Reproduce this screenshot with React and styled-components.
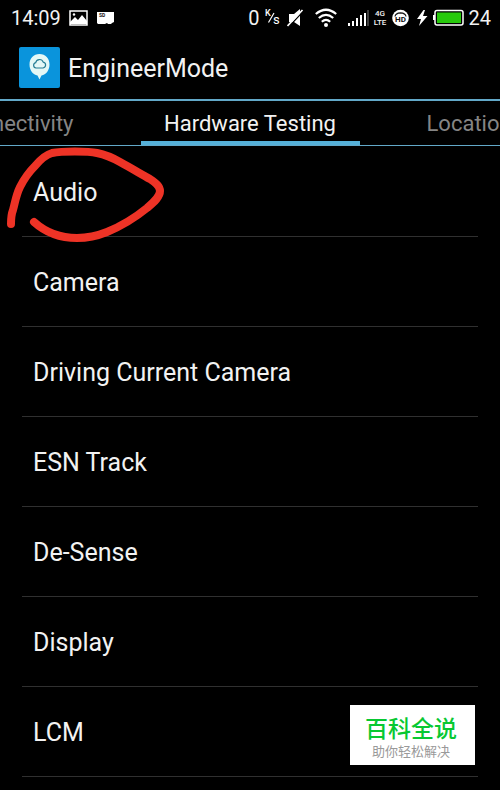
import { useState } from "react";
import styled, { createGlobalStyle } from "styled-components";

const tests = [
  "Audio",
  "Camera",
  "Driving Current Camera",
  "ESN Track",
  "De-Sense",
  "Display",
  "LCM",
];

function StatusBar() {
  return (
    <Status>
      <StatusGroup $gap={8}>
        <StatusText>14:09</StatusText>
        <svg width="19" height="16" viewBox="0 0 19 16">
          <rect x="1" y="1" width="17" height="14" fill="none" stroke="#fff" strokeWidth="1.5" />
          <path d="M1 14V12L6 7l3 3 4-5 5 6v3z" fill="#fff" />
          <circle cx="5" cy="4.5" r="1.2" fill="#fff" />
        </svg>
        <svg width="18" height="16" viewBox="0 0 18 16">
          <path d="M1 2h17v10l-2 1-1 1h-3l-1-1-2 1H2l-1-1z" fill="#fff" />
          <text x="3" y="7" fontSize="5" fontWeight="700" fill="#111">SD</text>
        </svg>
      </StatusGroup>
      <StatusGroup $gap={5}>
        <StatusText>0</StatusText>
        <svg width="17" height="20" viewBox="0 0 17 20">
          <text x="0" y="8" fontSize="9" fontWeight="500" fill="#fff">K</text>
          <path d="M3.5 14.5L9 5" stroke="#fff" strokeWidth="1.2" />
          <text x="8" y="16" fontSize="13" fill="#fff">s</text>
        </svg>
        <svg width="23" height="18" viewBox="0 0 23 18">
          <path d="M2 5h5l6-5v17l-6-4H2z" fill="#fff" />
          <path d="M2 17.500L17 1.500" stroke="#000" strokeWidth="1.200" />
          <path d="M0.500 17L15.500 1" stroke="#fff" strokeWidth="1.700" />
        </svg>
        <svg width="27" height="20" viewBox="0 0 27 20">
          <g fill="none" stroke="#fff" strokeWidth="2.200">
            <path d="M0.800 6Q11-2.500 21.200 6" />
            <path d="M3.800 10Q11 3.700 18.200 10" />
            <path d="M6.800 13.800Q11 10 15.200 13.800" />
          </g>
          <circle cx="11" cy="17" r="2" fill="#fff" />
        </svg>
        <svg width="22" height="18" viewBox="0 0 22 18">
          <path d="M1 14h2v3H1zM5 12h2v5H5zM9 9h2v8H9zM13 6h2v11h-2zM17 4h2v13h-2z" fill="#fff" />
          <path d="M20 1h2v16h-2z" fill="#3c3c3c" />
        </svg>
        <Network>
          <span>4G</span>
          <span>LTE</span>
        </Network>
        <svg width="20" height="18" viewBox="0 0 20 18">
          <circle cx="8.500" cy="9" r="8.300" fill="#fff" />
          <path d="M3 7.500Q3.500 4 8.500 3.800Q13.500 4 14 7.500" fill="none" stroke="#111" strokeWidth="1.200" />
          <text x="8.500" y="13" fontSize="8" fontWeight="700" textAnchor="middle" fill="#111">HD</text>
        </svg>
        <svg width="11" height="18" viewBox="0 0 11 18">
          <path d="M6.500 1L0 10h4L2 17l8.500-10H6L8 1z" fill="#fff" />
        </svg>
        <svg width="31" height="18" viewBox="0 0 31 18">
          <rect x="2" y="1.500" width="28" height="14.500" rx="2" fill="none" stroke="#fff" strokeWidth="1.500" />
          <path d="M0 6h2v5H0z" fill="#fff" />
          <rect x="4" y="3.500" width="24" height="10.500" fill="#27c90c" />
        </svg>
        <StatusText>24</StatusText>
      </StatusGroup>
    </Status>
  );
}

function AppIcon() {
  return (
    <svg width="41" height="41" viewBox="0 0 41 41">
      <rect width="41" height="41" rx="2" fill="#0a94dc" />
      <path d="M20.500 7C14.500 7 10.500 11.500 10.500 17.500c0 6 3.500 10 8 11l2 4 2-4c4.500-1 8-5 8-11C30.500 11.500 26.500 7 20.500 7z" fill="#e4f8f6" />
      <path d="M17 21a2.700 2.700 0 0 1-.3-5.300 3.900 3.900 0 0 1 7.500-.6 3 3 0 0 1-.1 5.900z" fill="none" stroke="#257d94" strokeWidth="1.200" />
    </svg>
  );
}

export default function App() {
  const [selected, setSelected] = useState("Hardware Testing");

  return (
    <Page>
      <GlobalStyle />
      <StatusBar />
      <Header>
        <AppIcon />
        <Title>EngineerMode</Title>
      </Header>
      <Tabs role="tablist">
        {["Connectivity", "Hardware Testing", "Location"].map((name, i) => (
          <Tab
            key={name}
            role="tab"
            aria-selected={selected === name}
            $active={selected === name}
            $align={["right", "center", "left"][i]}
            onClick={() => setSelected(name)}
          >
            {name}
          </Tab>
        ))}
      </Tabs>
      <List>
        {tests.map((name) => (
          <Item key={name}>
            <ItemButton>{name}</ItemButton>
            {name === "Audio" && (
              <Marker width="170" height="100" viewBox="0 0 170 100" aria-hidden="true">
                <path d="M11 77C11 72 11 68 13 63C15 56 16 48 20 40C24 32 29 25 35 19C40 13 45 8 52 6C62 4 88 4 97 6C107 8 113 11 120 15C131 21 141 27 150 32C156 36 160 39 160 44C160 50 154 55 147 61C136 70 119 80 107 85C97 89 88 91 77 91C58 91 44 84 34 75" />
              </Marker>
            )}
          </Item>
        ))}
      </List>
      <Badge>
        <BadgeTitle>百科全说</BadgeTitle>
        <BadgeText>助你轻松解决</BadgeText>
      </Badge>
    </Page>
  );
}

const GlobalStyle = createGlobalStyle`
  * {
    box-sizing: border-box;
  }

  body {
    margin: 0;
    background: #000;
    color: #f2f2f2;
    font-family: Roboto, "Noto Sans CJK SC", sans-serif;
  }

  button {
    border: 0;
    background: none;
    color: inherit;
    font: inherit;
    cursor: pointer;
  }

  svg {
    flex-shrink: 0;
  }
`;

const Page = styled.div`
  min-height: 100vh;
  overflow: hidden;
`;

const Status = styled.div`
  display: flex;
  justify-content: space-between;
  align-items: center;
  height: 35px;
  padding: 0 9px 0 11px;
`;

const StatusGroup = styled.div`
  display: flex;
  align-items: center;
  gap: ${(props) => props.$gap}px;
`;

const StatusText = styled.span`
  font-size: 20px;
  line-height: 24px;
`;

const Network = styled.div`
  display: flex;
  flex-direction: column;
  align-items: center;
  width: 13px;
  font-size: 8px;
  font-weight: 500;
  line-height: 9px;
`;

const Header = styled.header`
  display: flex;
  align-items: center;
  gap: 8px;
  height: 66px;
  padding: 1px 19px 0;
  border-bottom: 2px solid #62a8c8;
`;

const Title = styled.h1`
  margin: 0;
  padding-top: 3px;
  font-size: 25px;
  font-weight: 400;
  line-height: 32px;
`;

const Tabs = styled.div`
  display: flex;
  justify-content: center;
  height: 45px;
  border-bottom: 1px solid #62a8c8;
`;

const Tab = styled.button`
  flex: 0 0 219px;
  padding: 6px 0 0;
  ${(props) => props.$align === "right" && "padding-right: 67px;"}
  ${(props) => props.$align === "left" && "padding-left: 67px;"}
  display: flex;
  justify-content: ${(props) => props.$align};
  align-items: center;
  border-bottom: 4px solid ${(props) => (props.$active ? "#55b0d9" : "transparent")};
  color: ${(props) => (props.$active ? "#f2f2f2" : "#858585")};
  font-size: 22px;
  line-height: 28px;
`;

const List = styled.ul`
  margin: 0;
  padding: 1px 22px 0;
  list-style: none;
`;

const Item = styled.li`
  position: relative;
  border-bottom: 1px solid #303030;
`;

const ItemButton = styled.button`
  display: block;
  width: 100%;
  height: 89px;
  padding: 2px 11px 0;
  font-size: 25px;
  line-height: 32px;
  text-align: left;
`;

const Marker = styled.svg`
  position: absolute;
  top: 0;
  left: -22px;
  z-index: 1;
  overflow: visible;
  pointer-events: none;
  fill: none;
  stroke: #ee3326;
  stroke-width: 8;
  stroke-linecap: round;
  stroke-linejoin: round;
`;

const Badge = styled.aside`
  position: fixed;
  right: 25px;
  bottom: 25px;
  width: 125px;
  height: 60px;
  padding: 11px 3px 0 0;
  background: #fff;
  text-align: center;
`;

const BadgeTitle = styled.div`
  color: #08c832;
  font-size: 23px;
  font-weight: 500;
  line-height: 28px;
`;

const BadgeText = styled.div`
  color: #999;
  font-size: 13px;
  line-height: 16px;
`;
